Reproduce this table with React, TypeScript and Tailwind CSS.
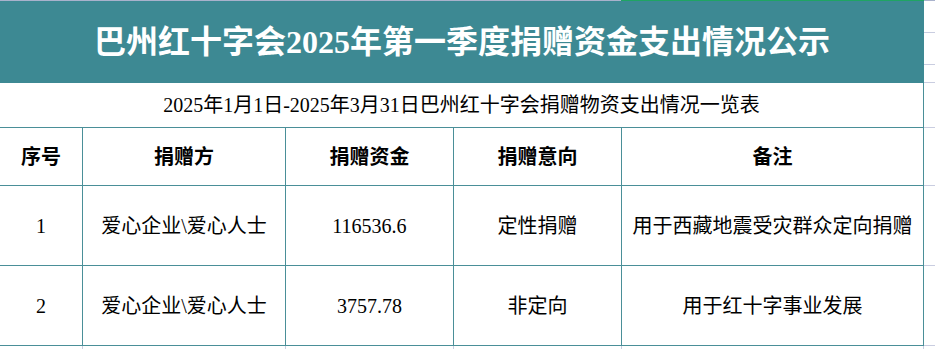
import { Fragment } from "react"

const rows = [
  { no: "1", donor: "爱心企业\\爱心人士", amount: "116536.6", intent: "定性捐赠", note: "用于西藏地震受灾群众定向捐赠" },
  { no: "2", donor: "爱心企业\\爱心人士", amount: "3757.78", intent: "非定向", note: "用于红十字事业发展" },
]

const cell = "flex items-center justify-center border-r border-b border-[#4a8f98] text-[20px] text-black"

const App = () => {
  return (
    <div className="w-[935px] h-[349px] overflow-hidden bg-white font-['Liberation_Serif','Noto_Sans_CJK_SC',serif]">
      {/* top edge of the sheet */}
      <div className="flex h-[1px]">
        <div className="w-[621px] bg-[#a9b2cc]"></div>
        <div className="w-[303px] bg-[#1fa463]"></div>
        <div className="flex-1 bg-[#a9b2cc]"></div>
      </div>
      <div className="flex">
        <div className="w-[924px] flex flex-col">
          <div className="h-[82px] bg-[#3d8993] flex items-center justify-center">
            <h1 className="text-[32px] font-bold text-white leading-none">巴州红十字会2025年第一季度捐赠资金支出情况公示</h1>
          </div>
          <div className="h-[45px] flex items-center justify-center border-r border-b border-[#4a8f98] text-[20px] text-black">
            2025年1月1日-2025年3月31日巴州红十字会捐赠物资支出情况一览表
          </div>
          <div className="grid grid-cols-[83px_203px_168px_168px_302px]">
            <div className={`${cell} h-[58px] font-bold`}>序号</div>
            <div className={`${cell} h-[58px] font-bold`}>捐赠方</div>
            <div className={`${cell} h-[58px] font-bold`}>捐赠资金</div>
            <div className={`${cell} h-[58px] font-bold`}>捐赠意向</div>
            <div className={`${cell} h-[58px] font-bold`}>备注</div>
            {rows.map((r) => (
              <Fragment key={r.no}>
                <div className={`${cell} h-[80px]`}>{r.no}</div>
                <div className={`${cell} h-[80px]`}>{r.donor}</div>
                <div className={`${cell} h-[80px]`}>{r.amount}</div>
                <div className={`${cell} h-[80px]`}>{r.intent}</div>
                <div className={`${cell} h-[80px]`}>{r.note}</div>
              </Fragment>
            ))}
          </div>
          <div className="grid grid-cols-[83px_203px_168px_168px_302px] h-[4px]">
            <div className="border-r border-[#c9cde0]"></div>
            <div className="border-r border-[#c9cde0]"></div>
            <div className="border-r border-[#c9cde0]"></div>
            <div className="border-r border-[#c9cde0]"></div>
            <div className="border-r border-[#c9cde0]"></div>
          </div>
        </div>
        {/* empty sheet columns to the right */}
        <div className="flex-1 flex flex-col">
          <div className="h-[32px] border-b border-[#c9cde0]"></div>
          <div className="h-[32px] border-b border-[#c9cde0]"></div>
          <div className="h-[18px] border-b border-[#c9cde0]"></div>
          <div className="h-[45px] border-b border-[#c9cde0]"></div>
          <div className="h-[58px] border-b border-[#c9cde0]"></div>
          <div className="h-[80px] border-b border-[#c9cde0]"></div>
          <div className="h-[80px] border-b border-[#c9cde0]"></div>
        </div>
      </div>
    </div>
  )
}

export default App
